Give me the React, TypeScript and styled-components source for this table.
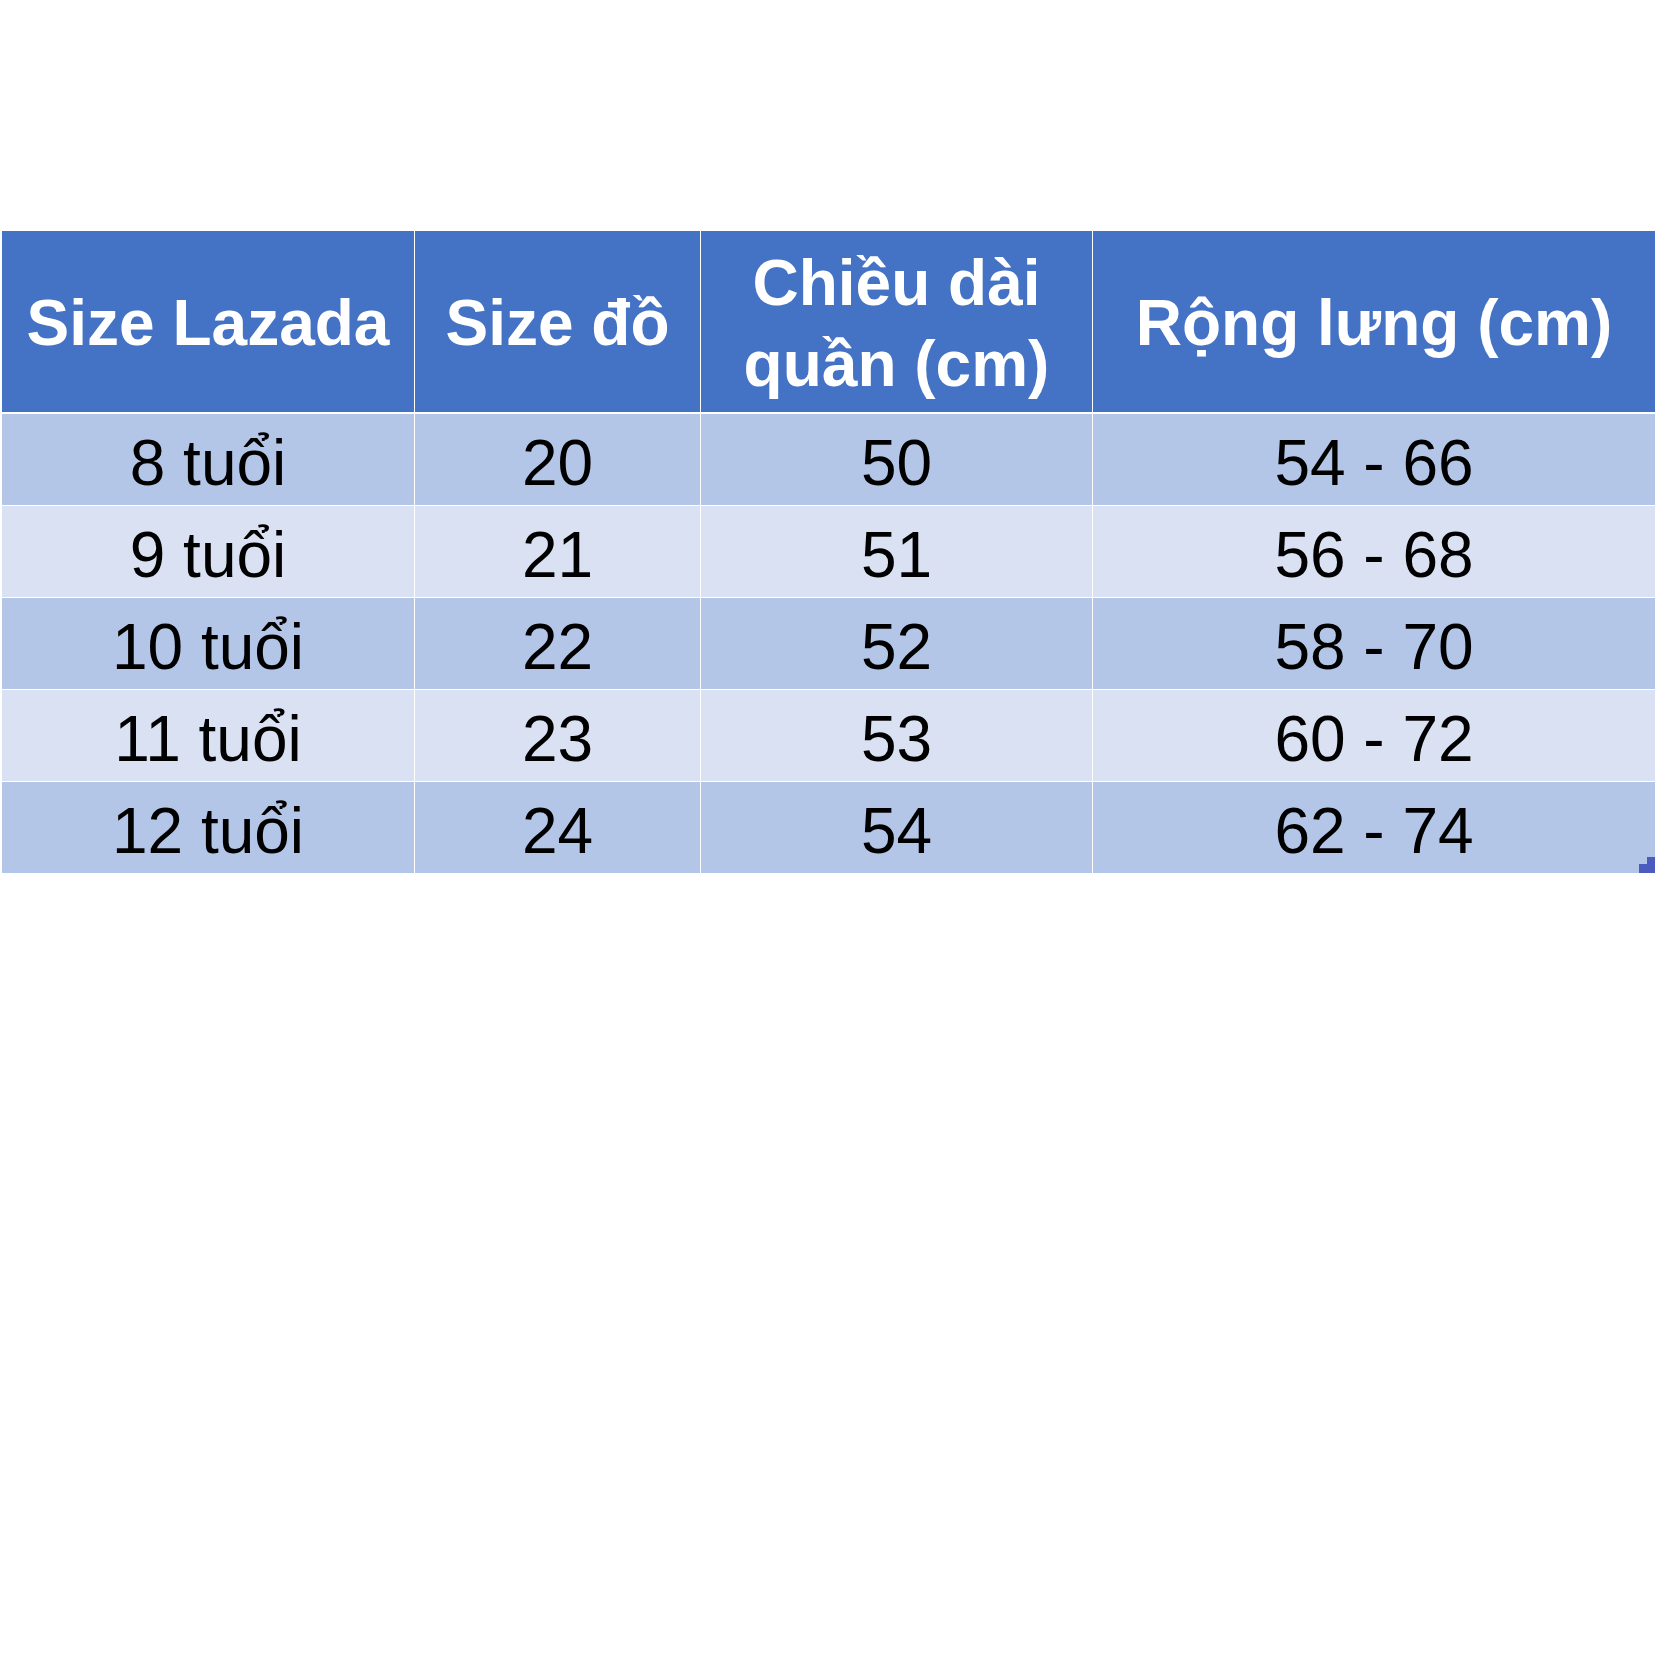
import React from "react";
import styled, { createGlobalStyle } from "styled-components";

const GlobalStyle = createGlobalStyle`
  html, body {
    margin: 0;
    padding: 0;
    background: #ffffff;
  }
  body {
    width: 1660px;
    height: 1660px;
    font-family: "Liberation Sans", Arial, sans-serif;
  }
`;

const Page = styled.div`
  width: 1660px;
  height: 1660px;
  padding: 231px 0 0 2px;
  box-sizing: border-box;
  background: #ffffff;
`;

const Table = styled.div`
  position: relative;
  width: 1653px;
  display: flex;
  flex-direction: column;
  gap: 1px;
  border-top: 0;
`;

const Row = styled.div<{ $header?: boolean }>`
  display: grid;
  grid-template-columns: 412px 285px 391px 562px;
  column-gap: 1px;
  height: ${(p) => (p.$header ? "181px" : "91px")};
  margin-bottom: ${(p) => (p.$header ? "1px" : "0")};
`;

const HeadCell = styled.div`
  background: #4472c4;
  color: #ffffff;
  font-family: "Liberation Sans", Arial, sans-serif;
  font-weight: 700;
  font-size: 64px;
  line-height: 81px;
  display: flex;
  align-items: center;
  justify-content: center;
  text-align: center;
  padding-top: 4px;
  box-sizing: border-box;
  white-space: nowrap;
`;

const BodyCell = styled.div<{ $alt: boolean }>`
  background: ${(p) => (p.$alt ? "#d9e1f2" : "#b4c6e7")};
  color: #000000;
  font-family: "Liberation Sans", Arial, sans-serif;
  font-weight: 400;
  font-size: 64px;
  line-height: 74px;
  display: flex;
  align-items: center;
  justify-content: center;
  padding-top: 7px;
  box-sizing: border-box;
  white-space: nowrap;
`;

const FillHandle = styled.svg`
  position: absolute;
  right: 0;
  bottom: 0;
  width: 16px;
  height: 16px;
`;

const headers = ["Size Lazada", "Size đồ", ["Chiều dài", "quần (cm)"], "Rộng lưng (cm)"];

const rows = [
  ["8 tuổi", "20", "50", "54 - 66"],
  ["9 tuổi", "21", "51", "56 - 68"],
  ["10 tuổi", "22", "52", "58 - 70"],
  ["11 tuổi", "23", "53", "60 - 72"],
  ["12 tuổi", "24", "54", "62 - 74"],
];

export default function App() {
  return (
    <>
      <GlobalStyle />
      <Page>
        <Table>
          <Row $header>
            {headers.map((h, i) => (
              <HeadCell key={i}>
                {Array.isArray(h) ? (
                  <span>
                    {h[0]}
                    <br />
                    {h[1]}
                  </span>
                ) : (
                  h
                )}
              </HeadCell>
            ))}
          </Row>
          {rows.map((r, ri) => (
            <Row key={ri}>
              {r.map((c, ci) => (
                <BodyCell key={ci} $alt={ri % 2 === 1}>
                  {c}
                </BodyCell>
              ))}
            </Row>
          ))}
          <FillHandle viewBox="0 0 16 16">
            <path d="M8 0H16V16H0V7H8Z" fill="#4a5dbe" />
          </FillHandle>
        </Table>
      </Page>
    </>
  );
}
